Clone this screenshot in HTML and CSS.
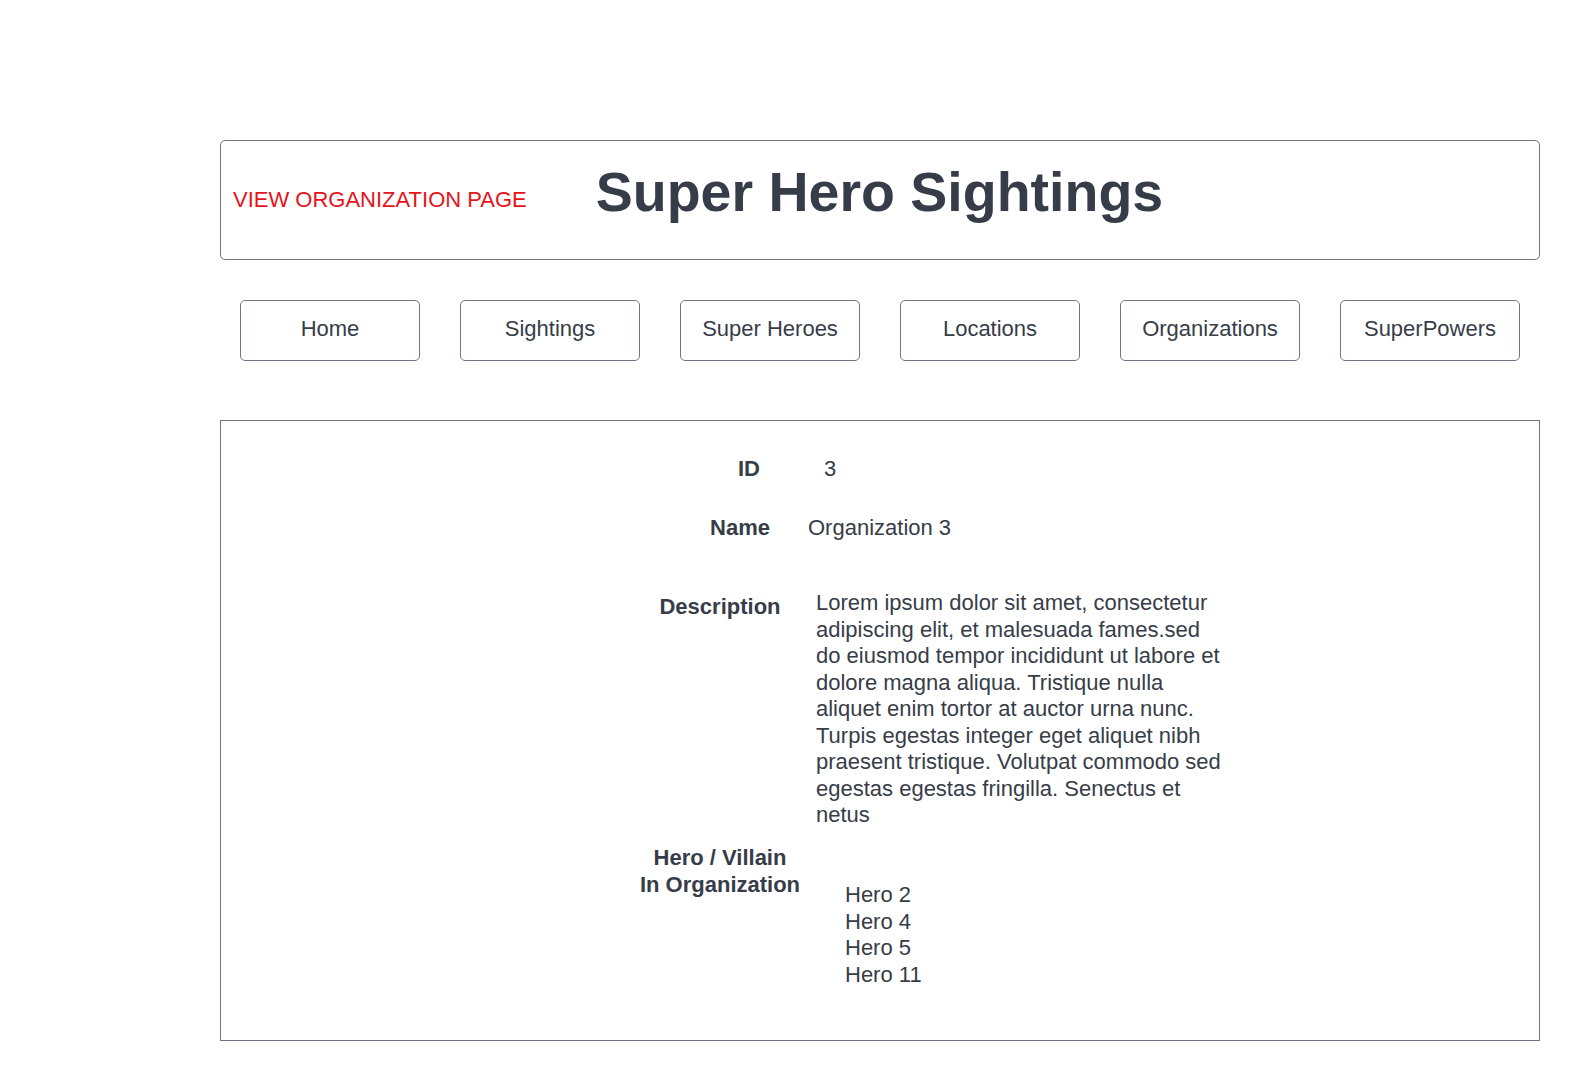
FILE: index.html
```html
<!DOCTYPE html>
<html lang="en">
<head>
<meta charset="utf-8">
<title>Super Hero Sightings - View Organization</title>
<link rel="stylesheet" href="styles.css">
</head>
<body>
<div class="page">
  <header class="header">
    <span class="page-tag">VIEW ORGANIZATION PAGE</span>
    <h1 class="title">Super Hero Sightings</h1>
  </header>

  <nav class="nav">
    <a class="nav-btn" href="#">Home</a>
    <a class="nav-btn" href="#">Sightings</a>
    <a class="nav-btn" href="#">Super Heroes</a>
    <a class="nav-btn" href="#">Locations</a>
    <a class="nav-btn" href="#">Organizations</a>
    <a class="nav-btn" href="#">SuperPowers</a>
  </nav>

  <main class="panel">
    <div class="row row-id">
      <div class="label">ID</div>
      <div class="value">3</div>
    </div>
    <div class="row row-name">
      <div class="label">Name</div>
      <div class="value">Organization 3</div>
    </div>
    <div class="row row-desc">
      <div class="label">Description</div>
      <div class="value">Lorem ipsum dolor sit amet, consectetur adipiscing elit, et malesuada fames.sed do eiusmod tempor incididunt ut labore et dolore magna aliqua. Tristique nulla aliquet enim tortor at auctor urna nunc. Turpis egestas integer eget aliquet nibh praesent tristique. Volutpat commodo sed egestas egestas fringilla. Senectus et netus</div>
    </div>
    <div class="row row-members">
      <div class="label">Hero / Villain<br>In Organization</div>
      <ul class="value member-list">
        <li>Hero 2</li>
        <li>Hero 4</li>
        <li>Hero 5</li>
        <li>Hero 11</li>
      </ul>
    </div>
  </main>
</div>
</body>
</html>
```

FILE: styles.css
```css
* {
  box-sizing: border-box;
}

html, body {
  margin: 0;
  padding: 0;
  background: #ffffff;
}

body {
  font-family: "Liberation Sans", Arial, sans-serif;
  color: #373d48;
}

.page {
  width: 1320px;
  margin-left: 220px;
  padding-top: 140px;
}

/* Header */
.header {
  height: 120px;
  border: 1px solid #6f7582;
  border-radius: 5px;
  display: flex;
  align-items: center;
  padding-left: 12px;
}

.page-tag {
  color: #e5141b;
  font-size: 22px;
  line-height: 26px;
}

.title {
  margin: 0 0 16px 69px;
  font-size: 55.5px;
  font-weight: 700;
  line-height: 64px;
  color: #373d48;
}

/* Nav */
.nav {
  display: flex;
  gap: 40px;
  padding: 0 20px;
  margin-top: 40px;
}

.nav-btn {
  width: 180px;
  height: 61px;
  border: 1px solid #6f7582;
  border-radius: 5px;
  display: flex;
  align-items: center;
  justify-content: center;
  font-size: 22px;
  color: #373d48;
  text-decoration: none;
  padding-bottom: 4px;
}

/* Detail panel */
.panel {
  margin-top: 59px;
  height: 621px;
  border: 1px solid #6f7582;
  padding-top: 35px;
}

.row {
  display: flex;
  align-items: flex-start;
}

.label {
  width: 200px;
  margin-left: 399px;
  font-size: 22px;
  font-weight: 700;
  line-height: 26.5px;
  text-align: center;
}

.value {
  font-size: 22px;
  line-height: 26.5px;
}

.row-id .label {
  text-align: right;
  padding-right: 60px;
}
.row-id .value {
  margin-left: 4px;
}

.row-name {
  margin-top: 32.5px;
}
.row-name .label {
  text-align: right;
  padding-right: 50px;
}
.row-name .value {
  margin-left: -12px;
}

.row-desc {
  margin-top: 48.5px;
}
.row-desc .label {
  margin-top: 4px;
}
.row-desc .value {
  margin-left: -4px;
  width: 410px;
}

.row-members {
  margin-top: 16.5px;
}
.member-list {
  list-style: none;
  margin: 37px 0 0 25px;
  padding: 0;
}
```
